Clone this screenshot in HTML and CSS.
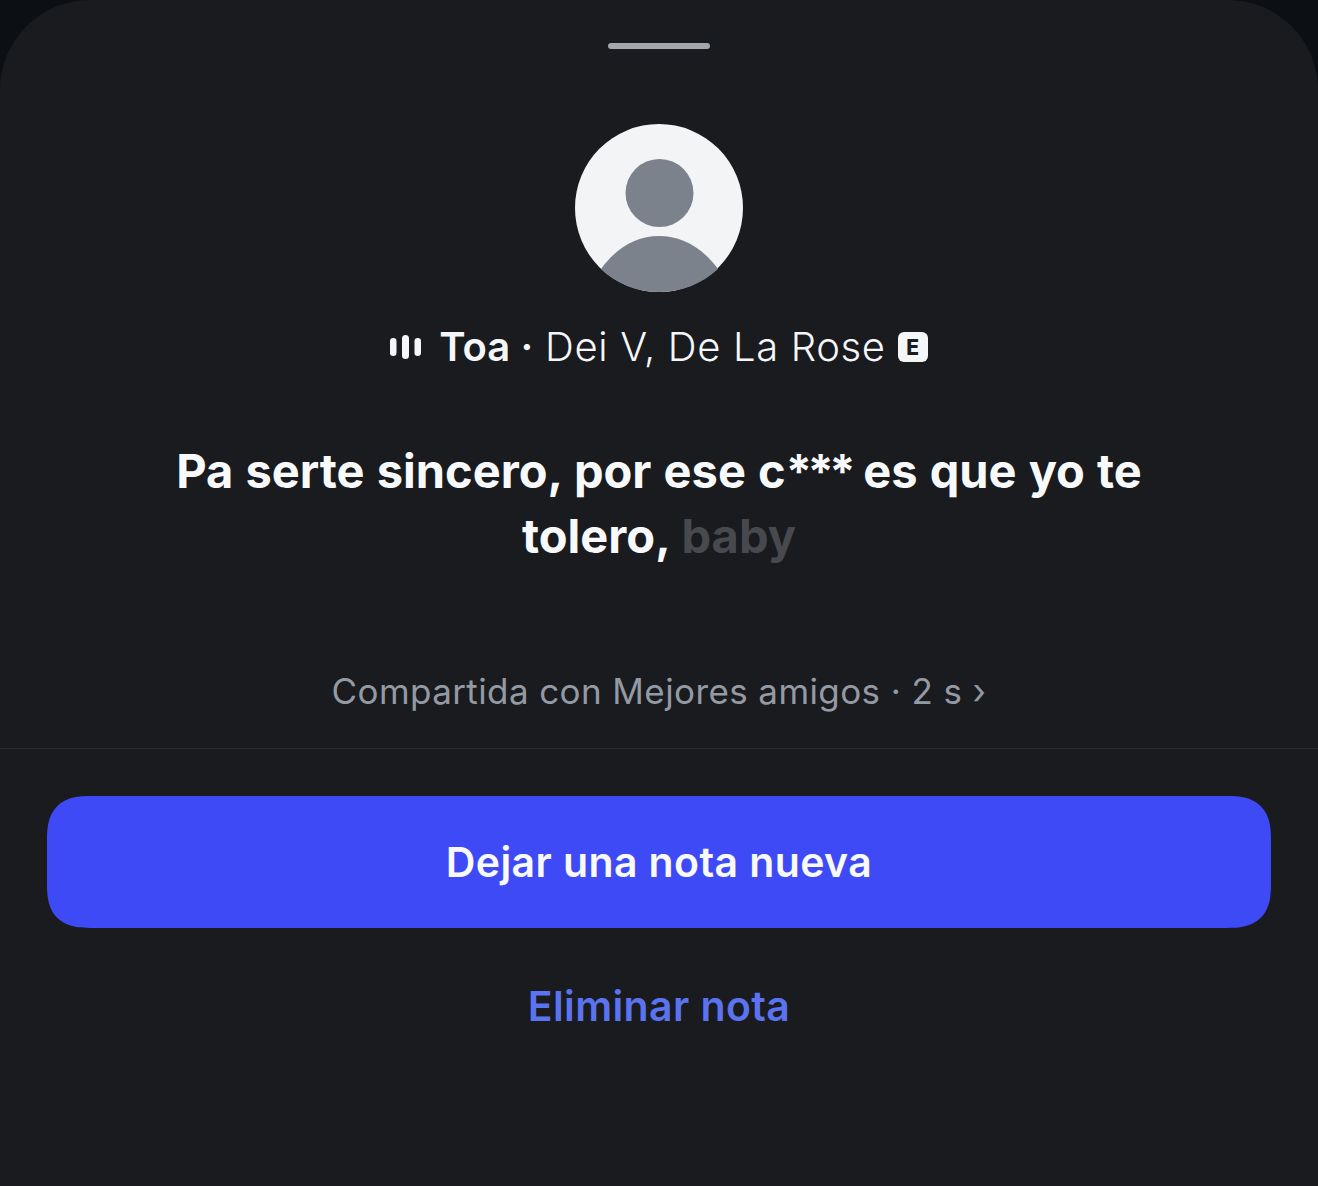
FILE: index.html

```html
<!DOCTYPE html>
<html lang="es">
<head>
  <meta charset="UTF-8">
  <title>Nota</title>
  <link rel="stylesheet" href="styles.css">
</head>
<body>
  <div class="sheet">
    <div class="handle"></div>

    <svg class="avatar" viewBox="0 0 168 168">
      <circle cx="84" cy="84" r="84" fill="#f2f4f6"/>
      <circle cx="84.500" cy="69" r="34" fill="#7b828c"/>
      <path d="M26 145 C42 123 62 112 84 112 C106 112 127 123 143 145 C127 160 106 168 84 168 C62 168 42 160 26 145 Z" fill="#7b828c"/>
    </svg>

    <div class="track">
      <svg class="bars" viewBox="0 0 31 24">
        <rect x="0" y="3" width="6.500" height="18" rx="3.200"/>
        <rect x="12" y="0" width="7" height="24" rx="3.500"/>
        <rect x="24.500" y="3" width="6.500" height="18" rx="3.200"/>
      </svg>
      <span class="track-text"><strong>Toa ·</strong> Dei V, De La Rose</span>
      <span class="explicit">E</span>
    </div>

    <p class="lyric">Pa serte sincero, por ese c<span class="stars">***</span> es que yo te<br>tolero, <span class="faded">baby</span></p>

    <p class="meta">Compartida con Mejores amigos · 2 s ›</p>

    <div class="divider"></div>

    <div class="actions">
      <button type="button" class="btn-primary">Dejar una nota nueva</button>
      <button type="button" class="btn-link">Eliminar nota</button>
    </div>
  </div>
</body>
</html>
```

FILE: styles.css

```css
html, body {
  margin: 0;
  height: 100%;
}
body {
  background-color: #0c1014;
  font-family: Inter, 'Noto Sans', sans-serif;
  color: #fff;
  overflow: hidden;
}
.sheet {
  background-color: #191b1f;
  border-radius: 90px 90px 0 0;
  height: 1186px;
  display: flex;
  flex-direction: column;
  align-items: center;
  padding-top: 43px;
  box-sizing: border-box;
}
.handle {
  width: 102px;
  height: 6px;
  border-radius: 3px;
  background-color: #a2a8b0;
}
.avatar {
  width: 168px;
  height: 168px;
  margin-top: 75px;
  display: block;
}
.track {
  display: flex;
  align-items: center;
  margin-top: 32px;
  height: 46px;
  font-size: 40px;
  font-weight: 350;
  letter-spacing: 0.65px;
  color: #f5f6f8;
}
.track-text {
  margin-top: -2px;
  margin-left: -1px;
}
.track strong {
  font-weight: 600;
  letter-spacing: 0;
}
.bars {
  width: 31px;
  height: 24px;
  fill: #f5f6f8;
  margin-right: 19px;
}
.explicit {
  width: 30px;
  height: 30px;
  margin-left: 12px;
  border-radius: 6px;
  background-color: #f5f6f8;
  color: #191b1f;
  font-size: 21px;
  font-weight: 800;
  letter-spacing: 0;
  display: flex;
  align-items: center;
  justify-content: center;
}
.lyric {
  margin: 68px 0 0;
  font-size: 47px;
  line-height: 65px;
  font-weight: 700;
  word-spacing: 1px;
  text-align: center;
  color: #f8f9fb;
}
.stars {
  letter-spacing: -4.500px;
}
.faded {
  color: #47494e;
}
.meta {
  margin: 100px 0 0;
  font-size: 35px;
  line-height: 46px;
  font-weight: 375;
  letter-spacing: 0.4px;
  color: #949aa3;
}
.divider {
  align-self: stretch;
  height: 1px;
  background-color: #2a2c30;
  margin-top: 34px;
}
.actions {
  align-self: stretch;
  padding: 47px 47px 0;
  display: flex;
  flex-direction: column;
}
button {
  font-family: inherit;
  border: none;
  cursor: pointer;
  font-size: 41px;
  font-weight: 575;
  letter-spacing: 0.4px;
}
.btn-primary {
  height: 132px;
  border-radius: 44px;
  corner-shape: superellipse(1.4);
  background-color: #3f4af7;
  color: #f8f9fb;
}
.btn-link {
  margin-top: 52px;
  height: 50px;
  background: none;
  color: #5b73ee;
}
```
